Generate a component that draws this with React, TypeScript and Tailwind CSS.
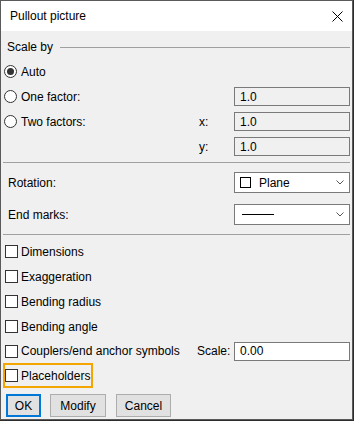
import React from "react";

const font = { fontFamily: '"Liberation Sans", Arial, sans-serif' };

function Radio({ checked = false }: { checked?: boolean }) {
  return (
    <span className="flex h-[13px] w-[13px] shrink-0 items-center justify-center rounded-full border border-[#333] bg-white">
      {checked && <span className="h-[7px] w-[7px] rounded-full bg-[#333]" />}
    </span>
  );
}

function Check() {
  return <span className="block h-[13px] w-[13px] shrink-0 border border-[#333] bg-white" />;
}

function Field({ value, disabled = false }: { value: string; disabled?: boolean }) {
  return (
    <div
      className={
        "flex h-[19px] w-[116px] shrink-0 items-center border border-[#7a7a7a] pl-[5px] " +
        (disabled ? "bg-[#f0f0f0]" : "bg-white")
      }
    >
      {value}
    </div>
  );
}

function Chevron() {
  return (
    <svg width="8" height="5" viewBox="0 0 8 5" className="ml-auto mr-[5px]">
      <polyline points="0.5,0.5 4,4 7.5,0.5" fill="none" stroke="#555" strokeWidth="1" />
    </svg>
  );
}

function Combo({ children }: { children: React.ReactNode }) {
  return (
    <div className="flex h-[21px] w-[116px] shrink-0 items-center border border-[#7a7a7a] bg-white pl-[5px]">
      {children}
      <Chevron />
    </div>
  );
}

function CheckRow({ label, children }: { label: string; children?: React.ReactNode }) {
  return (
    <div className="flex h-[25px] items-center pl-[4px] pr-[2px]">
      <Check />
      <span className="ml-[3px] flex-1">{label}</span>
      {children}
    </div>
  );
}

function Btn({ label, width, primary = false }: { label: string; width: string; primary?: boolean }) {
  return (
    <div
      className={
        "flex h-[23px] items-center justify-center bg-[#e1e1e1] " +
        width +
        (primary ? " border-2 border-[#0078d7]" : " border border-[#adadad]")
      }
    >
      {label}
    </div>
  );
}

export default function App() {
  return (
    <div className="h-[421px] w-[354px] bg-[#2d2d2d]" style={font}>
      <div className="flex h-[420px] w-[353px] flex-col border border-[#5a5a5a] text-[12px] leading-none text-black">
        {/* title bar */}
        <div className="flex h-[30px] shrink-0 items-center bg-white pl-[9px] pr-[9px]">
          <span>Pullout picture</span>
          <svg width="11" height="11" viewBox="0 0 11 11" className="ml-auto">
            <path d="M0.5 0.5 L10.5 10.5 M10.5 0.5 L0.5 10.5" stroke="#000" strokeWidth="1" />
          </svg>
        </div>

        <div className="flex flex-1 flex-col bg-[#f0f0f0] pt-[4px]">
          {/* Scale by */}
          <div className="flex h-[24px] items-center pl-[6px] pr-[2px]">
            <span>Scale by</span>
            <div className="ml-[7px] h-px flex-1 bg-[#a0a0a0]" />
          </div>
          <div className="flex h-[25px] items-center pl-[3px]">
            <Radio checked />
            <span className="ml-[4px]">Auto</span>
          </div>
          <div className="flex h-[25px] items-center pl-[3px] pr-[2px]">
            <Radio />
            <span className="ml-[4px] flex-1">One factor:</span>
            <Field value="1.0" disabled />
          </div>
          <div className="flex h-[25px] items-center pl-[3px] pr-[2px]">
            <Radio />
            <span className="ml-[4px] flex-1">Two factors:</span>
            <span className="w-[35px]">x:</span>
            <Field value="1.0" disabled />
          </div>
          <div className="flex h-[25px] items-center justify-end pr-[2px]">
            <span className="w-[35px]">y:</span>
            <Field value="1.0" disabled />
          </div>

          <div className="mx-[2px] mt-[3px] h-px bg-[#a0a0a0]" />

          <div className="mt-[7px] flex h-[25px] items-center pl-[7px] pr-[2px]">
            <span className="flex-1">Rotation:</span>
            <Combo>
              <span className="block h-[11px] w-[11px] border border-black" />
              <span className="ml-[8px]">Plane</span>
            </Combo>
          </div>
          <div className="mt-[7px] flex h-[25px] items-center pl-[7px] pr-[2px]">
            <span className="flex-1">End marks:</span>
            <Combo>
              <span className="ml-[2px] block h-px w-[32px] bg-black" />
            </Combo>
          </div>

          <div className="mx-[2px] mt-[7px] h-px bg-[#a0a0a0]" />

          <div className="mt-[4px] flex flex-col">
            <CheckRow label="Dimensions" />
            <CheckRow label="Exaggeration" />
            <CheckRow label="Bending radius" />
            <CheckRow label="Bending angle" />
            <div className="flex h-[24px] items-center pl-[4px] pr-[2px]">
              <Check />
              <span className="ml-[3px] flex-1">Couplers/end anchor symbols</span>
              <span className="w-[37px]">Scale:</span>
              <Field value="0.00" />
            </div>
          </div>

          <div className="flex pl-[2px]">
            <div className="flex h-[25px] items-center border-2 border-[#f5a500] pr-[1px]">
              <Check />
              <span className="ml-[3px]">Placeholders</span>
            </div>
          </div>

          <div className="mt-[6px] flex gap-[9px] pl-[5px]">
            <Btn label="OK" width="w-[35px]" primary />
            <Btn label="Modify" width="w-[56px]" />
            <Btn label="Cancel" width="w-[55px] ml-px" />
          </div>
        </div>
      </div>
    </div>
  );
}
